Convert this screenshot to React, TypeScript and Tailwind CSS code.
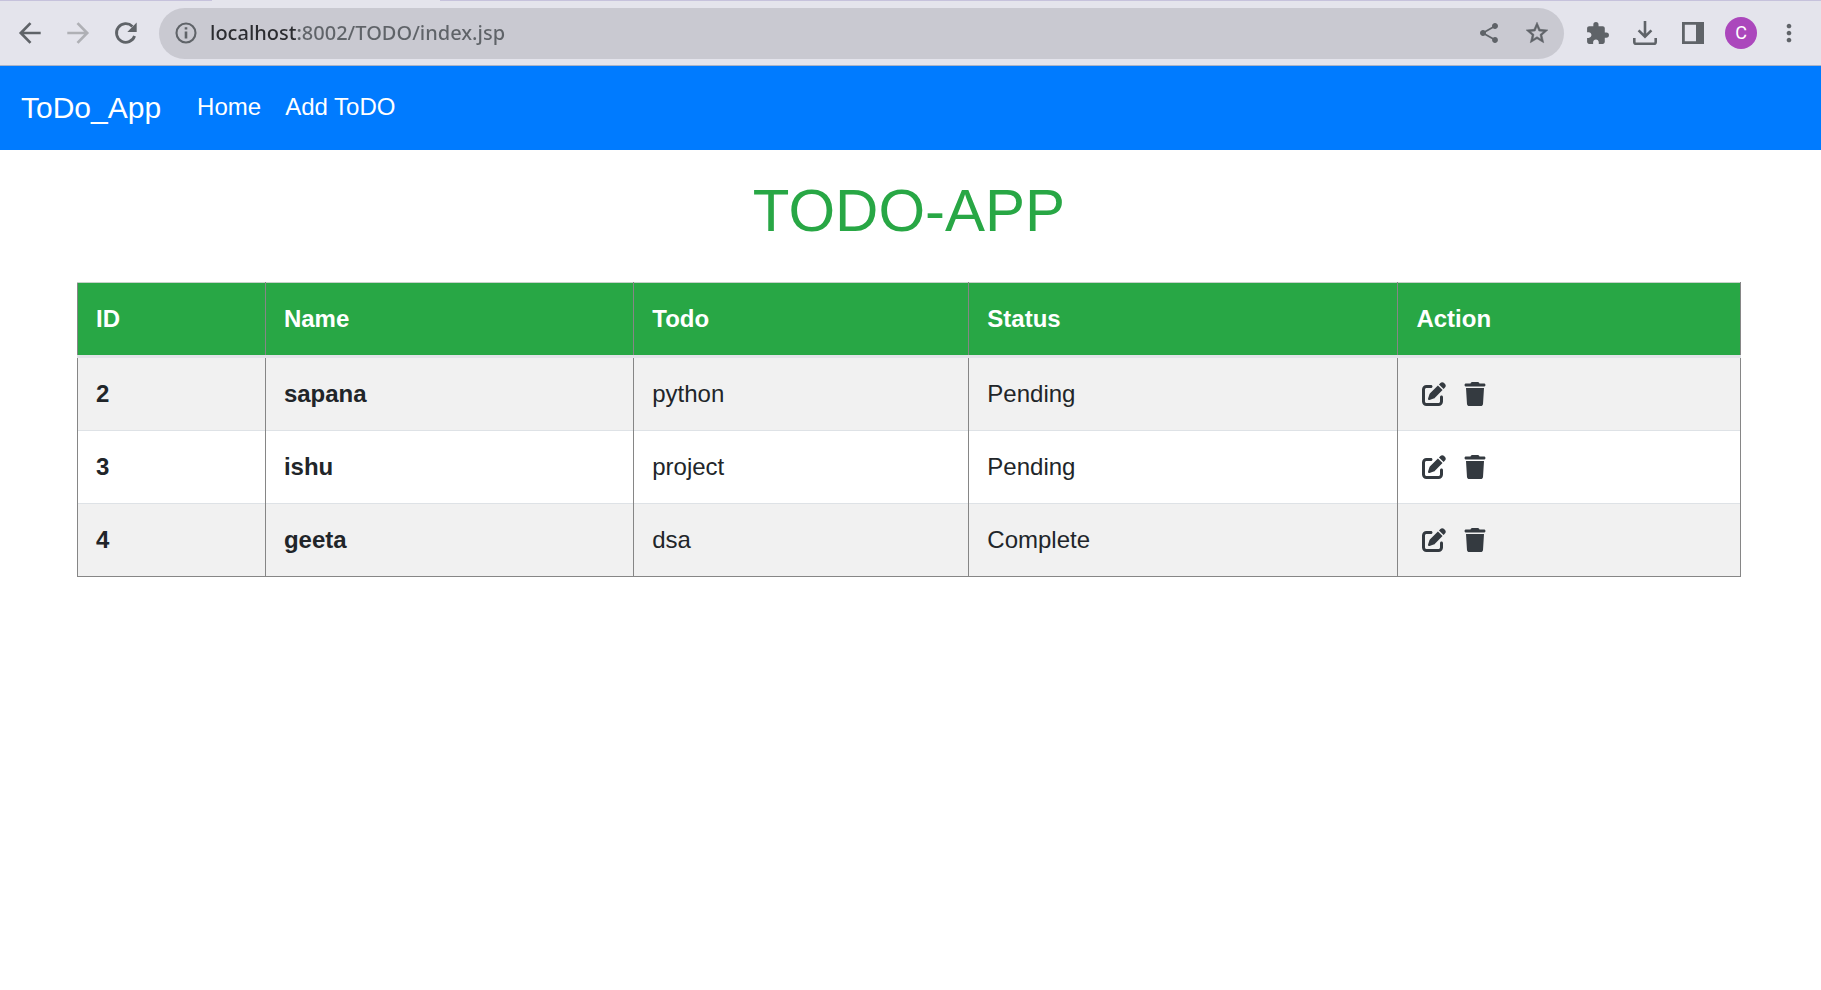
import type { ReactNode } from "react";
import { MdExtension, MdMoreVert, MdShare, MdStarOutline } from "react-icons/md";
import { FaPenToSquare, FaTrash } from "react-icons/fa6";

type Todo = { id: number; name: string; todo: string; status: string };

const todos: Todo[] = [
  { id: 2, name: "sapana", todo: "python", status: "Pending" },
  { id: 3, name: "ishu", todo: "project", status: "Pending" },
  { id: 4, name: "geeta", todo: "dsa", status: "Complete" },
];

function ToolButton({ label, children, dim = false }: { label: string; children: ReactNode; dim?: boolean }) {
  return (
    <button
      type="button"
      aria-label={label}
      className={`flex size-8 shrink-0 items-center justify-center ${dim ? "text-[#afb0b5]" : "text-[#5f6368]"}`}
    >
      {children}
    </button>
  );
}

function ArrowIcon({ forward = false }: { forward?: boolean }) {
  return (
    <svg viewBox="0 0 32 32" className="size-8" fill="none" stroke="currentColor" strokeWidth="2.7">
      <path d={forward ? "M5.3 16H25M15.5 6.1L25.2 16l-9.7 9.9" : "M26.7 16H7M16.5 6.1L6.8 16l9.7 9.9"} />
    </svg>
  );
}

function ReloadIcon() {
  return (
    <svg viewBox="0 0 32 32" className="size-8" fill="none" stroke="currentColor" strokeWidth="2.8">
      <path d="M24.6 19A9.3 9.3 0 1 1 22.4 9.4" />
      <path d="M26.7 5.4v9.6h-9.4z" fill="currentColor" stroke="none" />
    </svg>
  );
}

function InfoIcon() {
  return (
    <svg viewBox="0 0 24 24" className="size-6 shrink-0 text-[#5f6368]" fill="none" stroke="currentColor">
      <circle cx="12" cy="12" r="9.5" strokeWidth="2.1" />
      <path d="M12 6.2v2.4M12 10.6v7" strokeWidth="2.6" />
    </svg>
  );
}

function DownloadIcon() {
  return (
    <svg viewBox="0 0 24 24" className="size-6" fill="none" stroke="currentColor" strokeWidth="2.6">
      <path d="M12 0v15.5M5.6 9.4l6.4 6.2 6.4-6.2" />
      <path d="M1.3 17v3.9a1.8 1.8 0 0 0 1.8 1.8h17.8a1.8 1.8 0 0 0 1.8-1.8V17" />
    </svg>
  );
}

function SidePanelIcon() {
  return (
    <svg viewBox="0 0 22 22" className="size-[22px]" fill="currentColor">
      <path fillRule="evenodd" d="M0 0h22v22H0zM2.8 2.8v16.4h11.2V2.8z" />
    </svg>
  );
}

function BrowserBar() {
  return (
    <header className="bg-[#e4e4ec]">
      <div className="flex h-px">
        <div className="w-[212px] bg-[#c6c2dc]" />
        <div className="w-[228px]" />
        <div className="flex-1 bg-[#c6c2dc]" />
      </div>
      <div className="flex h-[65px] items-center border-b border-[#a9b3c8] pr-4 pl-[14px]">
        <div className="flex gap-4">
          <ToolButton label="Back">
            <ArrowIcon />
          </ToolButton>
          <ToolButton label="Forward" dim>
            <ArrowIcon forward />
          </ToolButton>
          <ToolButton label="Reload">
            <ReloadIcon />
          </ToolButton>
        </div>
        <div className="ml-[17px] flex h-[51px] flex-1 items-center rounded-full bg-[#c9c9d1] pr-[11px] pl-[15px]">
          <InfoIcon />
          <input
            aria-label="Address"
            defaultValue="localhost:8002/TODO/index.jsp"
            className="ml-3 flex-1 bg-[linear-gradient(to_right,#2b2c30_88px,#5f6368_88px)] bg-clip-text font-['Noto_Sans',sans-serif] text-xl font-medium text-transparent outline-none"
          />
          <div className="flex gap-4">
            <ToolButton label="Share">
              <MdShare className="size-6" />
            </ToolButton>
            <ToolButton label="Bookmark">
              <MdStarOutline className="size-[26px] [&>path:last-child]:stroke-current [&>path:last-child]:stroke-[0.5]" />
            </ToolButton>
          </div>
        </div>
        <div className="ml-[17px] flex gap-4">
          <ToolButton label="Extensions">
            <MdExtension className="size-[25px]" />
          </ToolButton>
          <ToolButton label="Downloads">
            <DownloadIcon />
          </ToolButton>
          <ToolButton label="Side panel">
            <SidePanelIcon />
          </ToolButton>
          <button
            type="button"
            className="flex size-8 items-center justify-center rounded-full bg-[#ab47bc] font-[Roboto,sans-serif] text-lg text-white"
          >
            C
          </button>
          <ToolButton label="Menu">
            <MdMoreVert className="size-7" />
          </ToolButton>
        </div>
      </div>
    </header>
  );
}

function NavBar() {
  return (
    <nav className="flex h-[84px] items-center bg-[#007bff] px-[21px] text-2xl text-white">
      <a href="#" className="text-3xl">
        ToDo_App
      </a>
      <div className="ml-9 flex gap-6 pb-0.5">
        <a href="#home">Home</a>
        <a href="#add">Add ToDO</a>
      </div>
    </nav>
  );
}

function TodoTable() {
  return (
    <table className="w-full table-fixed border-collapse border border-[#868686] text-left text-2xl leading-9 text-[#212529]">
      <colgroup>
        <col className="w-[11.3%]" />
        <col className="w-[22.15%]" />
        <col className="w-[20.15%]" />
        <col className="w-[25.8%]" />
        <col />
      </colgroup>
      <thead className="bg-[#28a745] text-white">
        <tr>
          {["ID", "Name", "Todo", "Status", "Action"].map((title) => (
            <th key={title} scope="col" className="border-x border-t border-b-3 border-x-[#868686] border-t-[#c6d2ca] border-b-[#e2e3e8] p-[18px] font-bold">
              {title}
            </th>
          ))}
        </tr>
      </thead>
      <tbody>
        {todos.map((item) => (
          <tr key={item.id} className="border-t border-[#dee2e6] odd:bg-[#f1f1f1]">
            <th scope="row" className="border-x border-[#868686] p-[18px] font-bold">
              {item.id}
            </th>
            <th className="border-x border-[#868686] p-[18px] font-bold">{item.name}</th>
            <td className="border-x border-[#868686] p-[18px]">{item.todo}</td>
            <td className="border-x border-[#868686] p-[18px]">{item.status}</td>
            <td className="border-x border-[#868686] p-[18px]">
              <div className="flex items-center gap-[17px] pl-1.5 text-[#343a40]">
                <a href="#edit" aria-label={`Edit ${item.name}`}>
                  <FaPenToSquare className="size-6" />
                </a>
                <a href="#delete" aria-label={`Delete ${item.name}`}>
                  <FaTrash className="size-6" />
                </a>
              </div>
            </td>
          </tr>
        ))}
      </tbody>
    </table>
  );
}

export default function App() {
  return (
    <div className="min-h-screen bg-white font-['Liberation_Sans',Arial,sans-serif]">
      <BrowserBar />
      <NavBar />
      <main className="pr-20 pl-[77px]">
        <h1 className="py-6 text-center text-[60px] leading-[74px] text-[#28a745]">TODO-APP</h1>
        <div className="pt-[10px]">
          <TodoTable />
        </div>
      </main>
    </div>
  );
}
